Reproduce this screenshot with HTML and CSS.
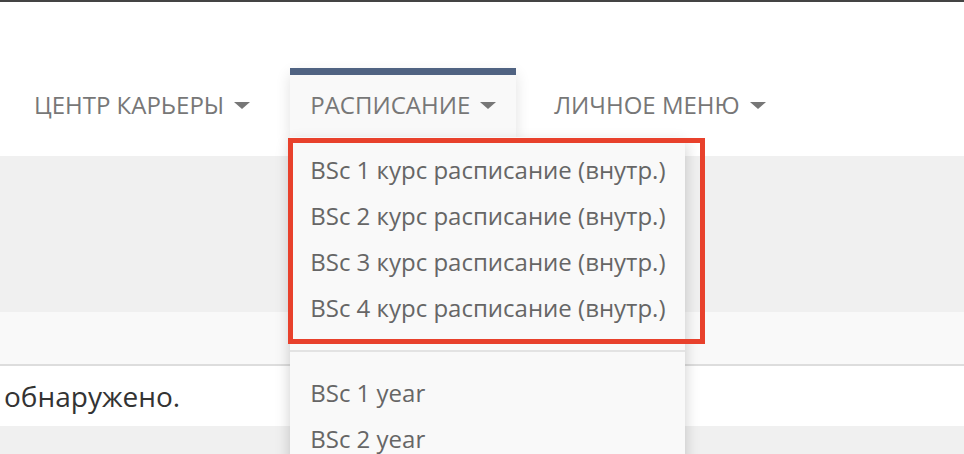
FILE: index.html
```html
<!DOCTYPE html>
<html lang="ru">
<head>
<meta charset="utf-8">
<link rel="stylesheet" href="styles.css">
</head>
<body>
<div class="topbar"></div>
<header class="header">
  <nav class="nav">
    <div class="nav-item"><span class="label">ЦЕНТР КАРЬЕРЫ</span><span class="caret"></span></div>
    <div class="nav-item active"><span class="label">РАСПИСАНИЕ</span><span class="caret"></span>
      <div class="dropdown">
        <div class="dd-item">BSc 1 курс расписание (внутр.)</div>
        <div class="dd-item">BSc 2 курс расписание (внутр.)</div>
        <div class="dd-item">BSc 3 курс расписание (внутр.)</div>
        <div class="dd-item">BSc 4 курс расписание (внутр.)</div>
        <div class="dd-divider"></div>
        <div class="dd-item">BSc 1 year</div>
        <div class="dd-item">BSc 2 year</div>
      </div>
      <div class="highlight"></div>
    </div>
    <div class="nav-item"><span class="label">ЛИЧНОЕ МЕНЮ</span><span class="caret"></span></div>
  </nav>
</header>
<main>
  <div class="band band-gray"></div>
  <div class="band band-light"></div>
  <div class="row-text">обнаружено.</div>
  <div class="band band-bottom"></div>
</main>
</body>
</html>
```
FILE: styles.css
```css
* { box-sizing: border-box; }
html, body { margin: 0; padding: 0; }
body {
  font-family: "Open Sans", "Noto Sans", sans-serif;
  background: #fff;
  overflow: hidden;
  height: 454px;
}
.topbar { height: 2px; background: #444; }
.header {
  height: 154px;
  display: flex;
  align-items: flex-start;
}
.nav {
  display: flex;
  gap: 18px;
  margin-top: 66px;
  padding-left: 13px;
}
.nav-item {
  position: relative;
  display: flex;
  align-items: center;
  gap: 10px;
  height: 69px;
  padding: 0 20px 4px 20px;
  font-size: 24px;
  color: #777;
  border-top: 7px solid transparent;
  white-space: nowrap;
}
.nav-item:first-child { padding-left: 21px; padding-right: 22px; }
.nav-item.active {
  background: #f9f9f9;
  border-top-color: #506382;
  box-shadow: 0 6px 14px rgba(0,0,0,0.12);
}
.caret {
  display: inline-block;
  width: 0; height: 0;
  border-left: 8px solid transparent;
  border-right: 8px solid transparent;
  border-top: 7px solid #777;
  margin-top: 2px;
}
.dropdown {
  position: absolute;
  left: 0;
  top: 62px;
  width: 395px;
  background: #f9f9f9;
  box-shadow: 0 6px 14px rgba(0,0,0,0.2);
  padding: 10px 0 0;
  z-index: 5;
  white-space: nowrap;
}
.dd-item {
  font-size: 24px;
  color: #666;
  padding: 0 20px;
  height: 46px;
  line-height: 46px;
}
.dd-divider {
  height: 2px;
  background: #e3e3e3;
  margin: 19px 0 18px;
}
.highlight {
  position: absolute;
  left: -2px;
  top: 63px;
  width: 417px;
  height: 206px;
  border: 5px solid #e8412c;
  z-index: 6;
}
.band-gray { height: 156px; background: #f0f0f0; }
.band-light { height: 54px; background: #f9f9f9; border-bottom: 2px solid #ddd; }
.row-text {
  height: 60px;
  background: #fff;
  font-size: 28px;
  color: #333;
  padding-left: 4px;
  line-height: 60px;
}
.band-bottom { height: 40px; background: #f0f0f0; }
```
